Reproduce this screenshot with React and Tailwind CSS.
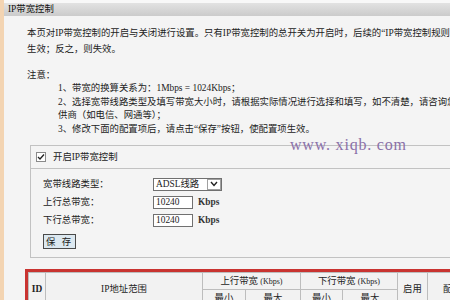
import React from 'react';

const notes = [
  '1、带宽的换算关系为：1Mbps = 1024Kbps；',
  '2、选择宽带线路类型及填写带宽大小时，请根据实际情况进行选择和填写，如不清楚，请咨询您的宽带提',
  '供商（如电信、网通等）；',
  '3、修改下面的配置项后，请点击“保存”按钮，使配置项生效。',
];

const TextBox = ({ value }) => (
  <div className="w-[40px] h-[13px] bg-white border border-[#707070] pl-[2px] flex items-center">{value}</div>
);

const App = () => {
  return (
    <div className="relative w-[450px] h-[300px] overflow-hidden bg-[#f4f4f4] border-l-4 border-[#f3d4b2] font-['Liberation_Serif','Noto_Sans_CJK_SC',serif] text-[9.4px] text-[#222] whitespace-nowrap">
      <div className="h-[3px] bg-[#f8f8f8]" />
      <div className="h-[13px] flex items-center pl-[4px] bg-gradient-to-b from-[#e2e2e2] to-[#cbcbcb] text-[#111]">IP带宽控制</div>

      <div className="mt-[9px] pl-[23px] leading-[16px]">
        <div>本页对IP带宽控制的开启与关闭进行设置。只有IP带宽控制的总开关为开启时，后续的“IP带宽控制规则”才能</div>
        <div>生效；反之，则失效。</div>
      </div>
      <div className="mt-[11px] pl-[23px] leading-[14px]">注意：</div>
      <div className="pl-[54px] leading-[13.5px]">
        {notes.map((n, i) => (
          <div key={i}>{n}</div>
        ))}
      </div>

      <div className="mt-[9px] ml-[26px] border-y border-l border-[#c2c2c2]">
        <div className="h-[23px] flex items-center gap-[7px] pl-[5px] border-b border-[#c2c2c2]">
          <span className="w-[10px] h-[10px] bg-white border border-[#8a8a8a] flex items-center justify-center">
            <svg width="8" height="8" viewBox="0 0 8 8">
              <path d="M1 4 L3 6 L7 1.5" fill="none" stroke="#222" strokeWidth="1.3" />
            </svg>
          </span>
          <span>开启IP带宽控制</span>
        </div>
        <div className="pt-[8px] pb-[8px] pl-[12px] flex flex-col gap-[4px]">
          <div className="flex items-center">
            <span className="w-[110px]">宽带线路类型：</span>
            <div className="w-[69px] h-[13px] bg-white border border-[#707070] flex">
              <span className="flex-1 pl-[2px] flex items-center">ADSL线路</span>
              <span className="w-[14px] border border-[#a0a0a0] flex items-center justify-center">
                <svg width="8" height="6" viewBox="0 0 8 6">
                  <path d="M1 1 L4 4.5 L7 1" fill="none" stroke="#222" strokeWidth="1.4" />
                </svg>
              </span>
            </div>
          </div>
          <div className="flex items-center">
            <span className="w-[110px]">上行总带宽：</span>
            <TextBox value="10240" />
            <span className="ml-[5px] font-bold text-[#333]">Kbps</span>
          </div>
          <div className="flex items-center">
            <span className="w-[110px]">下行总带宽：</span>
            <TextBox value="10240" />
            <span className="ml-[5px] font-bold text-[#333]">Kbps</span>
          </div>
          <div className="mt-[3px]">
            <button className="w-[33px] h-[15px] bg-[#dce8f0] border border-[#4a4a4a] flex items-center justify-center text-[9.4px] tracking-[2px] font-['Liberation_Serif','Noto_Sans_CJK_SC',serif]">保 存</button>
          </div>
        </div>
      </div>

      <div className="mt-[11px] ml-[21px] w-[460px] border-[3px] border-[#c93431] bg-[#f2f2f2]">
        <table className="table-fixed border-collapse text-center text-[#222]">
          <colgroup>
            <col className="w-[17px]" />
            <col className="w-[157px]" />
            <col className="w-[43px]" />
            <col className="w-[55px]" />
            <col className="w-[42px]" />
            <col className="w-[55px]" />
            <col className="w-[30px]" />
            <col className="w-[50px]" />
          </colgroup>
          <tbody>
            <tr className="h-[17px]">
              <td rowSpan={2} className="border border-[#bdbdbd] font-bold">ID</td>
              <td rowSpan={2} className="border border-[#bdbdbd]">IP地址范围</td>
              <td colSpan={2} className="border border-[#bdbdbd]">上行带宽 <span className="text-[8px]">(Kbps)</span></td>
              <td colSpan={2} className="border border-[#bdbdbd]">下行带宽 <span className="text-[8px]">(Kbps)</span></td>
              <td rowSpan={2} className="border border-[#bdbdbd]">启用</td>
              <td rowSpan={2} className="border border-[#bdbdbd]">配置</td>
            </tr>
            <tr className="h-[16px]">
              <td className="border border-[#bdbdbd]">最小</td>
              <td className="border border-[#bdbdbd]">最大</td>
              <td className="border border-[#bdbdbd]">最小</td>
              <td className="border border-[#bdbdbd]">最大</td>
            </tr>
          </tbody>
        </table>
      </div>

      <div className="absolute left-[286px] top-[137px] text-[16px] leading-none tracking-[0.8px] text-[#8a70a8] font-['Liberation_Serif',serif]">www. xiqb. com</div>
    </div>
  );
};

export default App;
